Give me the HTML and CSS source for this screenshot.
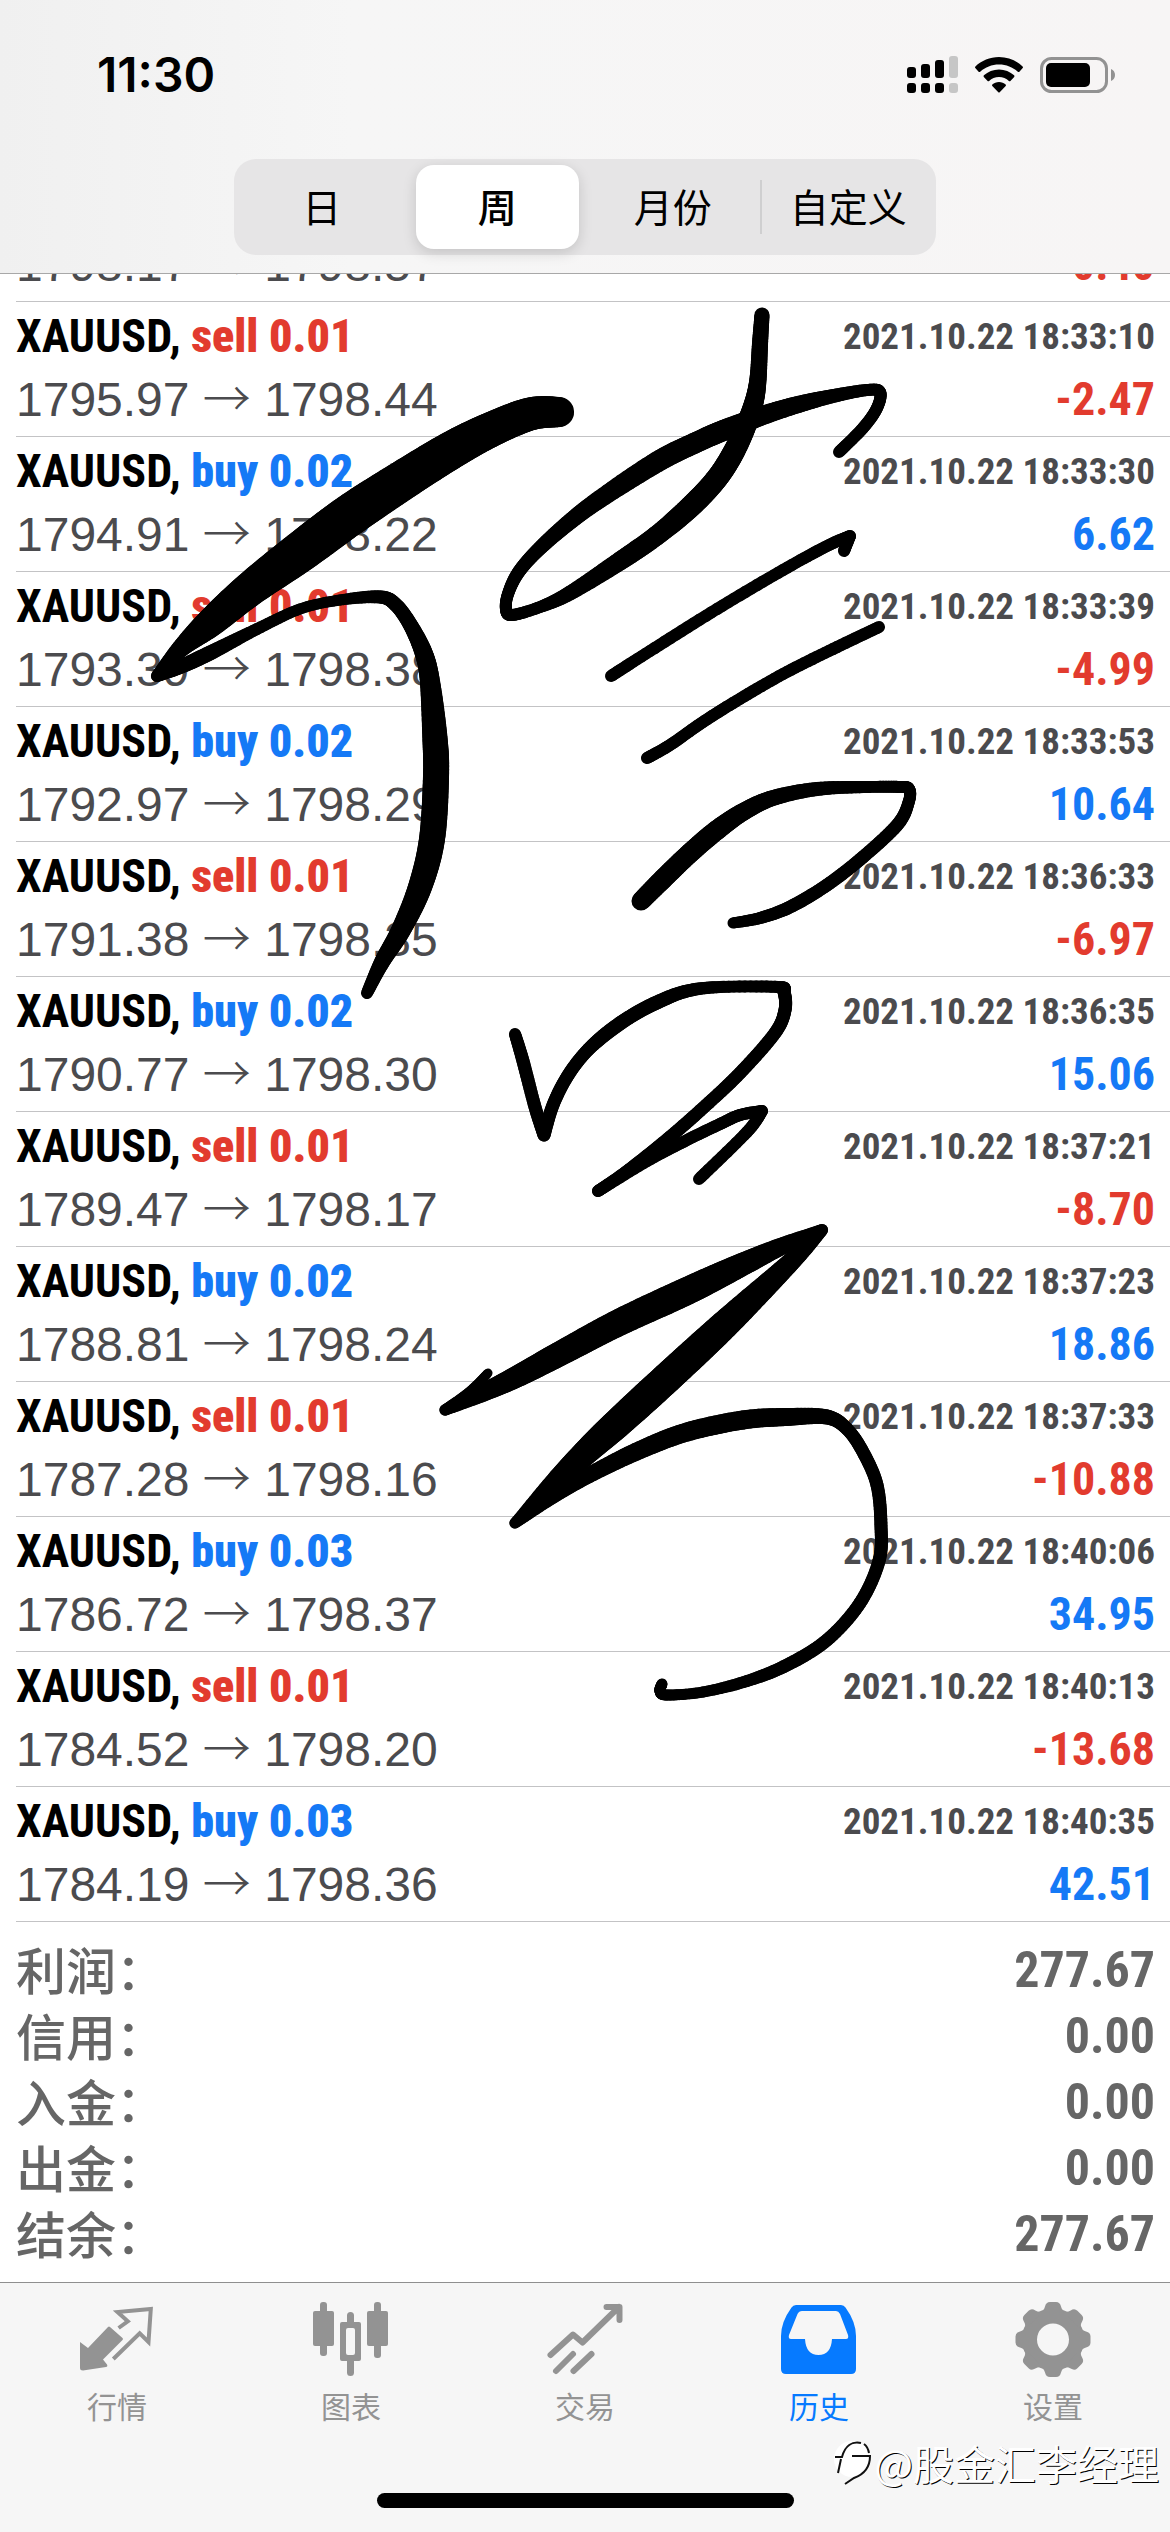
FILE: index.html
```html
<!DOCTYPE html>
<html lang="zh-CN">

<head>
    <meta charset="UTF-8">
    <meta name="viewport" content="width=device-width, initial-scale=1.0">
    <title>历史</title>
    <link rel="stylesheet" href="styles.css">
</head>

<body>
    <header class="header">
        <div class="status">
            <span class="time">11:30</span>
            <div class="status-icons">
                <svg width="51" height="37" viewBox="0 0 51 37">
                    <rect x="0" y="11" width="9" height="11" rx="3" />
                    <rect x="14" y="8" width="9" height="14" rx="3" />
                    <rect x="28" y="4" width="9" height="18" rx="3" />
                    <rect x="42" y="0" width="9" height="22" rx="3" fill="#c6c6c6" />
                    <rect x="0" y="27" width="9" height="10" rx="3" />
                    <rect x="14" y="27" width="9" height="10" rx="3" />
                    <rect x="28" y="27" width="9" height="10" rx="3" />
                    <rect x="42" y="27" width="9" height="10" rx="3" fill="#c6c6c6" />
                </svg>
                <svg width="48" height="36" viewBox="0 0 48 36">
                    <path d="M24 0C14.800 0 6.500 3.600 0.400 9.400C-0.100 9.900-0.100 10.500 0.300 11L3.600 14.700C4 15.200 4.700 15.200 5.200 14.800C10.200 10.200 16.800 7.600 24 7.600S37.800 10.200 42.800 14.800C43.300 15.200 44 15.200 44.400 14.700L47.700 11C48.100 10.500 48.100 9.900 47.600 9.400C41.500 3.600 33.200 0 24 0Z" />
                    <path d="M24 12.400C18.200 12.400 12.900 14.600 8.900 18.300C8.400 18.800 8.400 19.400 8.800 19.900L12.600 23.900C13 24.300 13.600 24.300 14.100 23.900C16.700 21.500 20.200 20.100 24 20.100S31.300 21.500 33.900 23.900C34.400 24.300 35 24.300 35.400 23.900L39.200 19.900C39.600 19.400 39.600 18.800 39.100 18.300C35.100 14.600 29.800 12.400 24 12.400Z" />
                    <path d="M24 25C21.400 25 19.100 26 17.300 27.600C16.900 28 16.900 28.500 17.300 28.900L23.300 35.300C23.700 35.700 24.300 35.700 24.700 35.300L30.700 28.900C31.100 28.500 31.100 28 30.700 27.600C28.900 26 26.600 25 24 25Z" />
                </svg>
                <svg width="75" height="36" viewBox="0 0 75 36">
                    <rect x="1.500" y="1.500" width="65" height="33" rx="10" fill="none" stroke="#929292" stroke-width="3" />
                    <rect x="6" y="6" width="44" height="24" rx="5" />
                    <path d="M71 12C73.500 13 75 15.300 75 18S73.500 23 71 24Z" fill="#929292" />
                </svg>
            </div>
        </div>
        <div class="segment">
            <button type="button">日</button>
            <button type="button" class="current">周</button>
            <button type="button">月份</button>
            <button type="button" class="line">自定义</button>
        </div>
    </header>

    <main class="history">
        <ul class="deals">
            <li>
                <div class="row"><span class="price">1798.17 <i>→</i> 1798.57</span><span class="profit sell">-0.40</span></div>
            </li>
            <li>
                <div class="row"><span class="symbol">XAUUSD, <b class="sell">sell 0.01</b></span><time>2021.10.22 18:33:10</time></div>
                <div class="row"><span class="price">1795.97 <i>→</i> 1798.44</span><span class="profit sell">-2.47</span></div>
            </li>
            <li>
                <div class="row"><span class="symbol">XAUUSD, <b class="buy">buy 0.02</b></span><time>2021.10.22 18:33:30</time></div>
                <div class="row"><span class="price">1794.91 <i>→</i> 1798.22</span><span class="profit buy">6.62</span></div>
            </li>
            <li>
                <div class="row"><span class="symbol">XAUUSD, <b class="sell">sell 0.01</b></span><time>2021.10.22 18:33:39</time></div>
                <div class="row"><span class="price">1793.39 <i>→</i> 1798.38</span><span class="profit sell">-4.99</span></div>
            </li>
            <li>
                <div class="row"><span class="symbol">XAUUSD, <b class="buy">buy 0.02</b></span><time>2021.10.22 18:33:53</time></div>
                <div class="row"><span class="price">1792.97 <i>→</i> 1798.29</span><span class="profit buy">10.64</span></div>
            </li>
            <li>
                <div class="row"><span class="symbol">XAUUSD, <b class="sell">sell 0.01</b></span><time>2021.10.22 18:36:33</time></div>
                <div class="row"><span class="price">1791.38 <i>→</i> 1798.35</span><span class="profit sell">-6.97</span></div>
            </li>
            <li>
                <div class="row"><span class="symbol">XAUUSD, <b class="buy">buy 0.02</b></span><time>2021.10.22 18:36:35</time></div>
                <div class="row"><span class="price">1790.77 <i>→</i> 1798.30</span><span class="profit buy">15.06</span></div>
            </li>
            <li>
                <div class="row"><span class="symbol">XAUUSD, <b class="sell">sell 0.01</b></span><time>2021.10.22 18:37:21</time></div>
                <div class="row"><span class="price">1789.47 <i>→</i> 1798.17</span><span class="profit sell">-8.70</span></div>
            </li>
            <li>
                <div class="row"><span class="symbol">XAUUSD, <b class="buy">buy 0.02</b></span><time>2021.10.22 18:37:23</time></div>
                <div class="row"><span class="price">1788.81 <i>→</i> 1798.24</span><span class="profit buy">18.86</span></div>
            </li>
            <li>
                <div class="row"><span class="symbol">XAUUSD, <b class="sell">sell 0.01</b></span><time>2021.10.22 18:37:33</time></div>
                <div class="row"><span class="price">1787.28 <i>→</i> 1798.16</span><span class="profit sell">-10.88</span></div>
            </li>
            <li>
                <div class="row"><span class="symbol">XAUUSD, <b class="buy">buy 0.03</b></span><time>2021.10.22 18:40:06</time></div>
                <div class="row"><span class="price">1786.72 <i>→</i> 1798.37</span><span class="profit buy">34.95</span></div>
            </li>
            <li>
                <div class="row"><span class="symbol">XAUUSD, <b class="sell">sell 0.01</b></span><time>2021.10.22 18:40:13</time></div>
                <div class="row"><span class="price">1784.52 <i>→</i> 1798.20</span><span class="profit sell">-13.68</span></div>
            </li>
            <li>
                <div class="row"><span class="symbol">XAUUSD, <b class="buy">buy 0.03</b></span><time>2021.10.22 18:40:35</time></div>
                <div class="row"><span class="price">1784.19 <i>→</i> 1798.36</span><span class="profit buy">42.51</span></div>
            </li>
        </ul>
        <dl class="total">
            <div><dt>利润：</dt><dd>277.67</dd></div>
            <div><dt>信用：</dt><dd>0.00</dd></div>
            <div><dt>入金：</dt><dd>0.00</dd></div>
            <div><dt>出金：</dt><dd>0.00</dd></div>
            <div><dt>结余：</dt><dd>277.67</dd></div>
        </dl>
        <svg class="pen" id="pen" viewBox="0 275 1170 2007"></svg>
    </main>

    <footer class="footer">
        <nav class="tabs">
            <a href="#">
                <svg viewBox="0 0 76 76">
                    <path d="M29 25Q30 24 31 25L43.500 36Q44.500 37 43.500 38L24 57.500L28 62.500Q29 64.500 27 65L4 68.500Q1 68.500 1 66V40L9 46Z" />
                    <path class="stroke" d="M39.600 26L48.800 19.300L38.500 10L71.800 7L69.500 40L60.700 31.300L34.300 57" />
                </svg>
                行情
            </a>
            <a href="#">
                <svg viewBox="0 0 76 76">
                    <rect x="7" y="0" width="7" height="54" rx="3" />
                    <rect x="0" y="9" width="21" height="35" rx="2" />
                    <rect x="61" y="0" width="7" height="56" rx="3" />
                    <rect x="54" y="9" width="21" height="35" rx="2" />
                    <path d="M34 20V13.500A3.500 3.500 0 0 1 41 13.500V20H46A2 2 0 0 1 48 22V57A2 2 0 0 1 46 59H41V70.500A3.500 3.500 0 0 1 34 70.500V59H29A2 2 0 0 1 27 57V22A2 2 0 0 1 29 20ZM35 26Q33 26 33 28V51Q33 53 35 53H40Q42 53 42 51V28Q42 26 40 26Z" fill-rule="evenodd" />
                </svg>
                图表
            </a>
            <a href="#">
                <svg viewBox="0 0 76 76">
                    <path class="stroke thick" d="M3.500 53L26 32.500L35.500 40.500L72 5M59.500 5H72.500V18" />
                    <path class="stroke thick" d="M9 69L26 52M26.500 69L44.500 52" />
                </svg>
                交易
            </a>
            <a href="#" class="current">
                <svg viewBox="0 0 76 76">
                    <path d="M15 3H60Q63 3 64.500 5.500Q75 20 75 34V67Q75 72 70 72H5Q0 72 0 67V34Q0 20 10.500 5.500Q12 3 15 3ZM21 9Q18 9 16.500 12L8 33Q7 37 10 37H24Q25 53 37.500 53T51 37H65Q68 37 67 33L59 12Q57.500 9 55 9Z" fill-rule="evenodd" />
                </svg>
                历史
            </a>
            <a href="#">
                <svg viewBox="0 0 76 76">
                    <g transform="translate(38 37.500)">
                        <circle r="23.500" fill="none" stroke="currentColor" stroke-width="15" />
                        <path id="tooth" d="M-13-27Q-9-29-8-33Q-7-37.500-3-37.500H3Q7-37.500 8-33Q9-29 13-27Z" />
                        <use href="#tooth" transform="rotate(45)" />
                        <use href="#tooth" transform="rotate(90)" />
                        <use href="#tooth" transform="rotate(135)" />
                        <use href="#tooth" transform="rotate(180)" />
                        <use href="#tooth" transform="rotate(225)" />
                        <use href="#tooth" transform="rotate(270)" />
                        <use href="#tooth" transform="rotate(315)" />
                    </g>
                </svg>
                设置
            </a>
        </nav>
        <div class="home"></div>
        <div class="mark">
            <svg width="42" height="50" viewBox="0 0 42 50">
                <circle cx="20" cy="22" r="18" fill="#fff" />
                <path d="M3 20H10C13 9 20 4 29 6M32 7Q36 10 37 16M20 19H38C38 30 33 37 22 41L13 47M9 22L6 36" />
            </svg>
            <span>@股金汇李经理</span>
        </div>
    </footer>

    <script src="script.js"></script>
</body>

</html>
```
FILE: styles.css
```css
* {
    padding: 0;
    margin: 0;
    list-style: none;
    box-sizing: border-box;
}

body {
    display: flex;
    flex-direction: column;
    height: 100vh;
    background: #fff;
    font-family: "Liberation Sans", "Noto Sans CJK SC", sans-serif;
}

/* 顶部 */
.header {
    display: flex;
    flex-direction: column;
    align-items: center;
    gap: 46px;
    padding: 36px 0 18px;
    background: linear-gradient(90deg, #f0f0f0, #f6f6f6 30%, #f7f5f5);
    border-bottom: 1px solid #a8a8a8;
}

.status {
    display: flex;
    justify-content: space-between;
    align-items: center;
    width: 100%;
    height: 77px;
    padding: 0 55px 0 97px;
}

.time {
    font-family: Inter, sans-serif;
    font-size: 48px;
    font-weight: 600;
}

.status-icons {
    display: flex;
    align-items: center;
    gap: 17px;
}

.segment {
    display: grid;
    grid-template-columns: repeat(4, 1fr);
    width: 60%;
    height: 96px;
    padding: 6px 0;
    background: #e6e5e6;
    border-radius: 22px;
}

.segment button {
    position: relative;
    margin: 0 6px;
    padding-bottom: 4px;
    border: 0;
    border-radius: 18px;
    background: none;
    color: #000;
    font-family: "Noto Sans CJK SC", sans-serif;
    font-size: 39px;
}

.segment .current {
    background: #fff;
    font-weight: 500;
    box-shadow: 0 4px 14px rgba(0, 0, 0, 0.15);
}

.segment .line::before {
    content: "";
    position: absolute;
    left: -7px;
    top: 15px;
    bottom: 15px;
    width: 2px;
    background: #cfcfd0;
}

/* 历史列表，滚动到底部 */
.history {
    position: relative;
    flex: 1;
    min-height: 0;
    overflow: hidden;
    display: flex;
    flex-direction: column;
    justify-content: flex-end;
}

.deals li {
    margin-left: 16px;
    padding: 3px 15px 5px 0;
    border-bottom: 1px solid #c3c3c5;
}

.row {
    display: flex;
    justify-content: space-between;
    align-items: center;
    height: 63px;
    line-height: 63px;
    font-size: 48px;
    color: #4b4b4e;
    white-space: nowrap;
}

.symbol,
.row time,
.profit,
.total dd {
    font-family: "Roboto Condensed", "Liberation Sans Narrow", "Liberation Sans", sans-serif;
    font-weight: bold;
}

.symbol,
.profit {
    font-size: 46px;
}

.symbol {
    color: #000;
}

.row time {
    font-size: 37px;
}

.price i {
    font-family: "Noto Sans CJK SC", sans-serif;
    font-style: normal;
    font-weight: 300;
    line-height: 1;
}

.row .buy {
    color: #1579f6;
}

.row .sell {
    color: #e23b2e;
}

.total {
    padding: 15px 15px 15px 16px;
    color: #666;
}

.total div {
    display: flex;
    justify-content: space-between;
    height: 66px;
    line-height: 66px;
    font-size: 50px;
}

.total dt {
    font-family: "Noto Sans CJK SC", sans-serif;
    font-weight: 500;
    line-height: 62px;
}

/* 手写笔迹 */
.pen {
    position: absolute;
    left: 0;
    top: 0;
    width: 100%;
    stroke: #000;
    stroke-linecap: round;
    pointer-events: none;
}

/* 底部 */
.footer {
    position: relative;
    height: 250px;
    padding-top: 19px;
    background: #f6f6f6;
    border-top: 1px solid #8f8f8f;
}

.tabs {
    display: grid;
    grid-template-columns: repeat(5, 1fr);
}

.tabs a {
    display: flex;
    flex-direction: column;
    align-items: center;
    gap: 5px;
    color: #939393;
    fill: currentColor;
    font-family: "Noto Sans CJK SC", sans-serif;
    font-size: 30px;
    line-height: 44px;
    text-decoration: none;
}

.tabs .current {
    color: #067aff;
}

.tabs svg {
    width: 76px;
    height: 76px;
}

.tabs .stroke {
    fill: none;
    stroke: currentColor;
    stroke-width: 4;
}

.tabs .thick {
    stroke-width: 6;
    stroke-linecap: round;
    stroke-linejoin: round;
}

.home {
    width: 417px;
    height: 15px;
    margin: 66px auto 0;
    border-radius: 8px;
    background: #000;
}

.mark {
    position: absolute;
    right: 11px;
    bottom: 42px;
    display: flex;
    align-items: center;
    font-family: "Noto Sans CJK SC", sans-serif;
    font-size: 41px;
    line-height: 56px;
    color: #fff;
    text-shadow: 1px 1px 0 #000;
}

.mark path {
    fill: none;
    stroke: #111;
    stroke-width: 2;
}
```
FILE: script.js
```js
// 每一笔由若干点组成：[x, y, 笔宽]
var strokes = [
    [[559, 413, 30], [530, 415, 33], [490, 431, 35], [450, 452, 38], [400, 483, 40], [350, 516, 42], [300, 553, 41], [250, 590, 35], [210, 624, 29], [180, 650, 18], [157, 677, 12]],
    [[157, 677, 12], [180, 668, 14], [210, 654, 15], [257, 630, 12], [300, 610, 11], [340, 601, 11], [380, 598, 13], [396, 606, 14], [411, 627, 15], [424, 655, 18], [430, 683, 20], [435, 740, 25], [436, 778, 26], [432, 840, 26], [420, 888, 24], [401, 931, 20], [382, 963, 16], [367, 994, 12]],
    [[762, 316, 15], [760, 345, 16], [758, 380, 17], [754, 403, 19], [745, 429, 21], [731, 458, 22], [714, 483, 22], [688, 510, 22], [656, 537, 20], [620, 562, 19], [570, 594, 15], [540, 608, 12], [512, 616, 12], [506, 610, 12], [508, 595, 12], [518, 574, 13], [537, 552, 14], [567, 525, 16], [600, 500, 18], [657, 463, 21], [697, 443, 21], [727, 430, 21], [767, 415, 19], [800, 405, 17], [833, 397, 14], [867, 391, 12], [880, 393, 12], [877, 409, 12], [863, 429, 12], [839, 453, 12]],
    [[611, 677, 12], [650, 652, 12], [717, 610, 12], [783, 571, 12], [827, 547, 12], [850, 537, 12]],
    [[850, 537, 12], [844, 552, 12]],
    [[879, 628, 12], [833, 650, 12], [783, 675, 12], [733, 704, 12], [700, 725, 12], [670, 746, 12], [647, 759, 12]],
    [[641, 902, 19], [663, 880, 20], [690, 854, 20], [717, 831, 20], [743, 813, 18], [773, 799, 16], [817, 790, 14], [867, 788, 12], [900, 788, 12], [909, 790, 12], [909, 802, 12], [898, 825, 13], [863, 858, 13], [827, 886, 13], [790, 908, 13], [760, 919, 12], [733, 924, 11]],
    [[515, 1035, 12], [523, 1062, 13], [535, 1108, 13], [544, 1136, 13]],
    [[544, 1136, 13], [553, 1106, 13], [567, 1078, 13], [585, 1054, 13], [607, 1034, 14], [633, 1016, 14], [660, 1002, 14], [687, 992, 13], [720, 988, 12], [778, 988, 12], [784, 993, 13], [785, 1011, 13], [775, 1034, 13], [740, 1074, 13], [703, 1109, 13], [670, 1138, 13], [643, 1160, 13], [620, 1177, 12], [598, 1192, 12]],
    [[598, 1192, 12], [647, 1162, 12], [687, 1141, 12], [720, 1125, 12], [740, 1116, 12], [762, 1112, 12]],
    [[762, 1112, 12], [747, 1133, 12], [699, 1180, 12]],
    [[488, 1374, 9], [470, 1393, 11], [445, 1411, 11]],
    [[445, 1411, 11], [487, 1392, 18], [520, 1376, 22], [563, 1353, 25], [620, 1323, 27], [687, 1292, 28], [737, 1268, 24], [780, 1248, 18], [822, 1231, 12]],
    [[822, 1231, 12], [800, 1254, 17], [770, 1283, 22], [720, 1330, 29], [667, 1379, 31], [620, 1422, 30], [587, 1452, 26], [553, 1485, 20], [515, 1524, 11]],
    [[515, 1524, 11], [553, 1497, 15], [593, 1474, 16], [640, 1451, 18], [687, 1433, 19], [743, 1421, 19], [787, 1418, 18], [827, 1418, 15], [847, 1430, 13], [863, 1453, 13], [877, 1486, 13], [881, 1527, 13], [879, 1562, 13], [860, 1604, 13], [827, 1641, 13], [787, 1666, 13], [747, 1682, 12], [703, 1693, 11], [667, 1696, 11], [660, 1692, 11], [662, 1685, 11]]
];

var pen = document.getElementById('pen');

// 样条插值，让笔画平滑
function spline(a, b, c, d, t) {
    return 0.5 * (2 * b + (c - a) * t + (2 * a - 5 * b + 4 * c - d) * t * t + (3 * b - a - 3 * c + d) * t * t * t);
}

strokes.forEach(function (points) {
    var last = points[0];
    for (var i = 0; i < points.length - 1; i++) {
        var p0 = points[Math.max(i - 1, 0)];
        var p1 = points[i];
        var p2 = points[i + 1];
        var p3 = points[Math.min(i + 2, points.length - 1)];
        for (var s = 1; s <= 12; s++) {
            var now = [0, 1, 2].map(function (k) {
                return spline(p0[k], p1[k], p2[k], p3[k], s / 12);
            });
            var line = document.createElementNS('http://www.w3.org/2000/svg', 'line');
            line.setAttribute('x1', last[0]);
            line.setAttribute('y1', last[1]);
            line.setAttribute('x2', now[0]);
            line.setAttribute('y2', now[1]);
            line.setAttribute('stroke-width', now[2]);
            pen.appendChild(line);
            last = now;
        }
    }
});
```
